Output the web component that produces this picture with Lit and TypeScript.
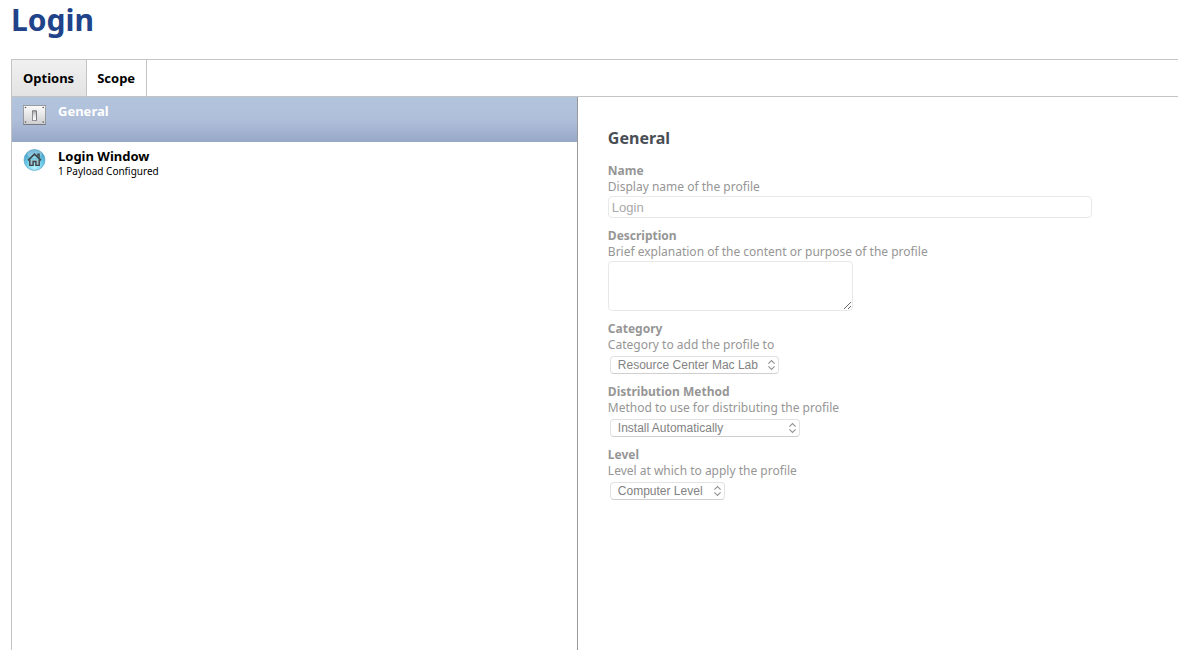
import { LitElement, html, css, svg } from "lit";
import { customElement, property, state } from "lit/decorators.js";
import { classMap } from "lit/directives/class-map.js";

const switchIcon = html`<svg width="24" height="24" viewBox="0 0 24 24" aria-hidden="true">
  <defs>
    <linearGradient id="plate" x1="0" y1="0" x2="0" y2="1">
      <stop offset="0" stop-color="#fcfcfc" /><stop offset="1" stop-color="#cfcfd1" />
    </linearGradient>
    <linearGradient id="lever" x1="0" y1="0" x2="0" y2="1">
      <stop offset="0" stop-color="#b0b0b0" /><stop offset="0.5" stop-color="#e2e2e2" /><stop offset="1" stop-color="#ffffff" />
    </linearGradient>
  </defs>
  <rect x="0" y="2" width="23" height="20" rx="1" fill="#77797f" />
  <rect x="0.7" y="2.7" width="21.6" height="18.3" rx="0.5" fill="url(#plate)" />
  ${[[2.5, 4.5], [20.2, 4.5], [2.5, 19], [20.2, 19]].map(
    ([x, y]) => svg`<circle cx=${x} cy=${y} r="0.8" fill="#55575c" />`
  )}
  <rect x="9" y="7.3" width="5" height="10.7" rx="1" fill="#77787c" />
  <rect x="9.8" y="8.3" width="3.2" height="8.9" rx="0.6" fill="url(#lever)" />
</svg>`;

const homeIcon = html`<svg width="24" height="24" viewBox="0 0 24 24" aria-hidden="true">
  <defs>
    <radialGradient id="ball" cx="0.5" cy="0.85" r="0.85">
      <stop offset="0" stop-color="#b5f3fd" /><stop offset="0.5" stop-color="#6cc9e8" /><stop offset="1" stop-color="#3f96c4" />
    </radialGradient>
  </defs>
  <circle cx="11.5" cy="12" r="10.5" fill="url(#ball)" stroke="#4b9cc0" stroke-width="0.6" />
  <ellipse cx="11.5" cy="6" rx="7.5" ry="4" fill="#ffffff" opacity="0.3" />
  <path d="M6.8 11.5V17.4h3.3v-3.9h2.8v3.9h3.3v-5.9" fill="#9fc6d0" stroke="#3d4547" stroke-width="1.4" />
  <path d="M14.8 8.5V6.2h1.4v3.6" fill="none" stroke="#3d4547" stroke-width="1.2" />
  <path d="M5 12.4L11.5 6.1l6.5 6.3" fill="none" stroke="#3d4547" stroke-width="1.6" />
</svg>`;

@customElement("payload-field")
class PayloadField extends LitElement {
  static styles = css`
    :host { display: block; }
    .name { display: block; font-weight: 700; }
    .hint { margin: 0; }
    input, textarea, select {
      box-sizing: border-box;
      font-family: "Liberation Sans", Arial, sans-serif;
      background: #fff;
      margin: 0;
    }
    input, textarea {
      display: block;
      border: 1px solid #e8e8e8;
      border-radius: 4px;
      color: #a9a9a9;
      font-size: 13px;
    }
    input { width: 85%; height: 22px; padding: 1px 3px; margin-top: 1px; }
    textarea { width: 245px; height: 50px; margin-top: 1px; }
    .picker { display: inline-grid; align-items: center; margin: 3px 0 0 2px; vertical-align: top; }
    .picker > * { grid-area: 1 / 1; }
    .picker svg { justify-self: end; margin-right: 3px; pointer-events: none; }
    select {
      appearance: none;
      height: 18px;
      padding: 0 14px 0 7px;
      border: 1px solid #e2e2e2;
      border-bottom-color: #cfcfcf;
      border-radius: 4px;
      color: #828282;
      font-size: 12px;
      line-height: 16px;
      opacity: 1;
    }
    .medium { width: 169px; }
    .wide { width: 190px; }
    .narrow { width: 115px; }
  `;
  @property() label = "";
  @property() hint = "";
  @property() kind = "text";
  @property() value = "";
  @property() size = "medium";

  control() {
    if (this.kind === "text") return html`<input id="c" type="text" .value=${this.value} disabled />`;
    if (this.kind === "area") return html`<textarea id="c" disabled></textarea>`;
    return html`<span class="picker">
      <select id="c" class=${this.size} disabled><option>${this.value}</option></select>
      <svg width="9" height="12" viewBox="0 0 9 12" fill="none" stroke="#969696" stroke-width="1.2" aria-hidden="true">
        <path d="M1.4 4.6L4.5 1.6l3.1 3M1.4 7.4l3.1 3 3.1-3" />
      </svg>
    </span>`;
  }

  render() {
    return html`<label class="name" for="c">${this.label}</label>
      <p class="hint">${this.hint}</p>
      ${this.control()}`;
  }
}

@customElement("app-root")
class AppRoot extends LitElement {
  static styles = css`
    :host {
      display: flex;
      flex-direction: column;
      box-sizing: border-box;
      min-height: 100vh;
      padding-left: 11px;
      background: #fff;
      color: #000;
      font-family: "Noto Sans", "Open Sans", sans-serif;
      font-size: 12px;
      line-height: 16px;
    }
    h1 { margin: 0 0 20px; font-size: 30px; line-height: 39px; color: #21438a; }
    .frame { flex: 1; display: flex; flex-direction: column; border: solid #c4c4c4; border-width: 1px 0 0 1px; }
    .tabs { display: flex; border-bottom: 1px solid #c4c4c4; }
    .tab {
      height: 36px;
      padding: 0 11px 0 10px;
      border: 0;
      border-right: 1px solid #c4c4c4;
      background: #fff;
      color: #000;
      font: 700 13px/36px "Noto Sans", "Open Sans", sans-serif;
    }
    .tab.active { padding: 0 12px 0 11px; background: linear-gradient(#f0f0f0, #e3e3e3); }
    .body { flex: 1; display: grid; grid-template-columns: 33fr 35fr; }
    .side { border-right: 1px solid #999; }
    .row {
      display: flex;
      gap: 11px;
      width: 100%;
      height: 45px;
      padding: 6px 11px;
      border: 0;
      background: #fff;
      color: #000;
      font: 10px/14px "Noto Sans", "Open Sans", sans-serif;
      text-align: left;
    }
    .row.active { background: linear-gradient(#b3c4dd, #afbfda 50%, #97a8c8); color: #fff; }
    .row strong { display: block; font-size: 13px; line-height: 16px; }
    .row svg { flex: none; }
    .detail { padding: 31px 0 0 30px; color: #969696; }
    h2 { margin: 0 0 15px; font-size: 16px; line-height: 20px; color: #4a4e55; }
    .fields { display: flex; flex-direction: column; gap: 10px; }
  `;
  @state() private tab = "Options";

  render() {
    return html`
      <h1>Login</h1>
      <div class="frame">
        <nav class="tabs">
          ${["Options", "Scope"].map(
            (t) => html`<button class=${classMap({ tab: true, active: t === this.tab })} @click=${() => (this.tab = t)}>${t}</button>`
          )}
        </nav>
        <div class="body">
          <aside class="side">
            <button class="row active">${switchIcon}<span><strong>General</strong></span></button>
            <button class="row">${homeIcon}<span><strong>Login Window</strong>1 Payload Configured</span></button>
          </aside>
          <main class="detail">
            <h2>General</h2>
            <div class="fields">
              <payload-field label="Name" hint="Display name of the profile" value="Login"></payload-field>
              <payload-field label="Description" hint="Brief explanation of the content or purpose of the profile" kind="area"></payload-field>
              <payload-field label="Category" hint="Category to add the profile to" kind="select" value="Resource Center Mac Lab"></payload-field>
              <payload-field label="Distribution Method" hint="Method to use for distributing the profile" kind="select" size="wide" value="Install Automatically"></payload-field>
              <payload-field label="Level" hint="Level at which to apply the profile" kind="select" size="narrow" value="Computer Level"></payload-field>
            </div>
          </main>
        </div>
      </div>
    `;
  }
}
